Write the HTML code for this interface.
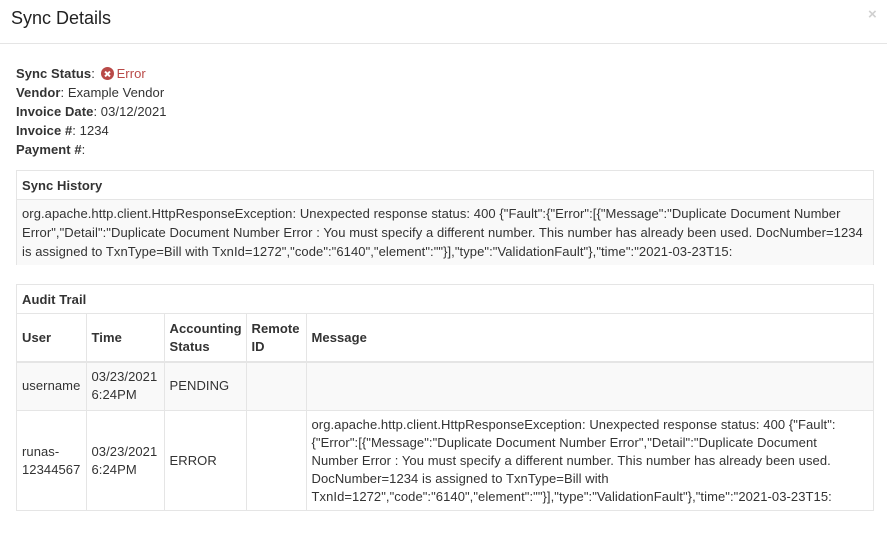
<!DOCTYPE html>
<html><head><style>
*{box-sizing:border-box}
body{margin:0;width:887px;height:544px;background:#fff;font-family:"Liberation Sans",Helvetica,Arial,sans-serif;font-size:13px;letter-spacing:0.07px;color:#333;overflow:hidden;position:relative}
.hdr{height:44px;border-bottom:1px solid #e5e5e5;position:relative}
.hdr h4{margin:0;position:absolute;left:11px;top:7px;font-size:18px;font-weight:normal;line-height:22px;color:#222;letter-spacing:0}
.close{position:absolute;left:868px;top:6px;font-size:15px;color:#d0d0d0;font-weight:bold}
.info{position:absolute;left:16px;top:64px;line-height:19px}
.info div{height:19px}
b{font-weight:bold}
.err{color:#b94a48}
.ic{display:inline-block;position:relative;width:13px;height:13px;border-radius:50%;background:#b94a48;vertical-align:-2px;margin:0 3px 0 2px}
.ic:before,.ic:after{content:"";position:absolute;left:3px;top:6px;width:7px;height:2px;background:#fff;transform:rotate(45deg)}
.ic:after{transform:rotate(-45deg)}
.panel{position:absolute;left:16px;width:858px;border:1px solid #e5e5e5}
.ph{height:29px;padding:7px 5px;font-weight:bold;border-bottom:1px solid #e5e5e5;line-height:15px}
.pb{background:#f9f9f9;padding:4px 5px;line-height:19px}
table{border-collapse:collapse;width:100%;table-layout:fixed}
td,th{border:1px solid #e5e5e5;padding:0 5px;text-align:left;vertical-align:middle;line-height:18px}
th{font-weight:bold;height:48px;border-bottom:2px solid #e5e5e5}
tr:first-child th{border-top:0}
td:first-child,th:first-child{border-left:0}
td:last-child,th:last-child{border-right:0}
.r2 td:last-child{padding-right:30px}
tr:last-child td{border-bottom:0}
.r1 td{background:#f9f9f9;height:48px}
.r2 td{height:101px}
</style></head><body>
<div class="hdr"><h4>Sync Details</h4><span class="close">×</span></div>
<div class="info">
<div><b>Sync Status</b>: <span class="err"><span class="ic"></span>Error</span></div>
<div><b>Vendor</b>: Example Vendor</div>
<div><b>Invoice Date</b>: 03/12/2021</div>
<div><b>Invoice #</b>: 1234</div>
<div><b>Payment #</b>:</div>
</div>
<div class="panel" style="top:170px;height:95px">
<div class="ph">Sync History</div>
<div class="pb">org.apache.http.client.HttpResponseException: Unexpected response status: 400 {"Fault":{"Error":[{"Message":"Duplicate Document Number Error","Detail":"Duplicate Document Number Error : You must specify a different number. This number has already been used. DocNumber=1234 is assigned to TxnType=Bill with TxnId=1272","code":"6140","element":""}],"type":"ValidationFault"},"time":"2021-03-23T15:</div>
</div>
<div class="panel" style="top:284px;height:227px">
<div class="ph">Audit Trail</div>
<table>
<colgroup><col style="width:69px"><col style="width:78px"><col style="width:82px"><col style="width:60px"><col></colgroup>
<tr><th>User</th><th>Time</th><th>Accounting Status</th><th>Remote ID</th><th>Message</th></tr>
<tr class="r1"><td>username</td><td>03/23/2021 6:24PM</td><td>PENDING</td><td></td><td></td></tr>
<tr class="r2"><td>runas-12344567</td><td>03/23/2021 6:24PM</td><td>ERROR</td><td></td><td>org.apache.http.client.HttpResponseException: Unexpected response status: 400 {"Fault":{"Error":[{"Message":"Duplicate Document Number Error","Detail":"Duplicate Document Number Error : You must specify a different number. This number has already been used. DocNumber=1234 is assigned to TxnType=Bill with TxnId=1272","code":"6140","element":""}],"type":"ValidationFault"},"time":"2021-03-23T15:</td></tr>
</table>
</div>
</body></html>
